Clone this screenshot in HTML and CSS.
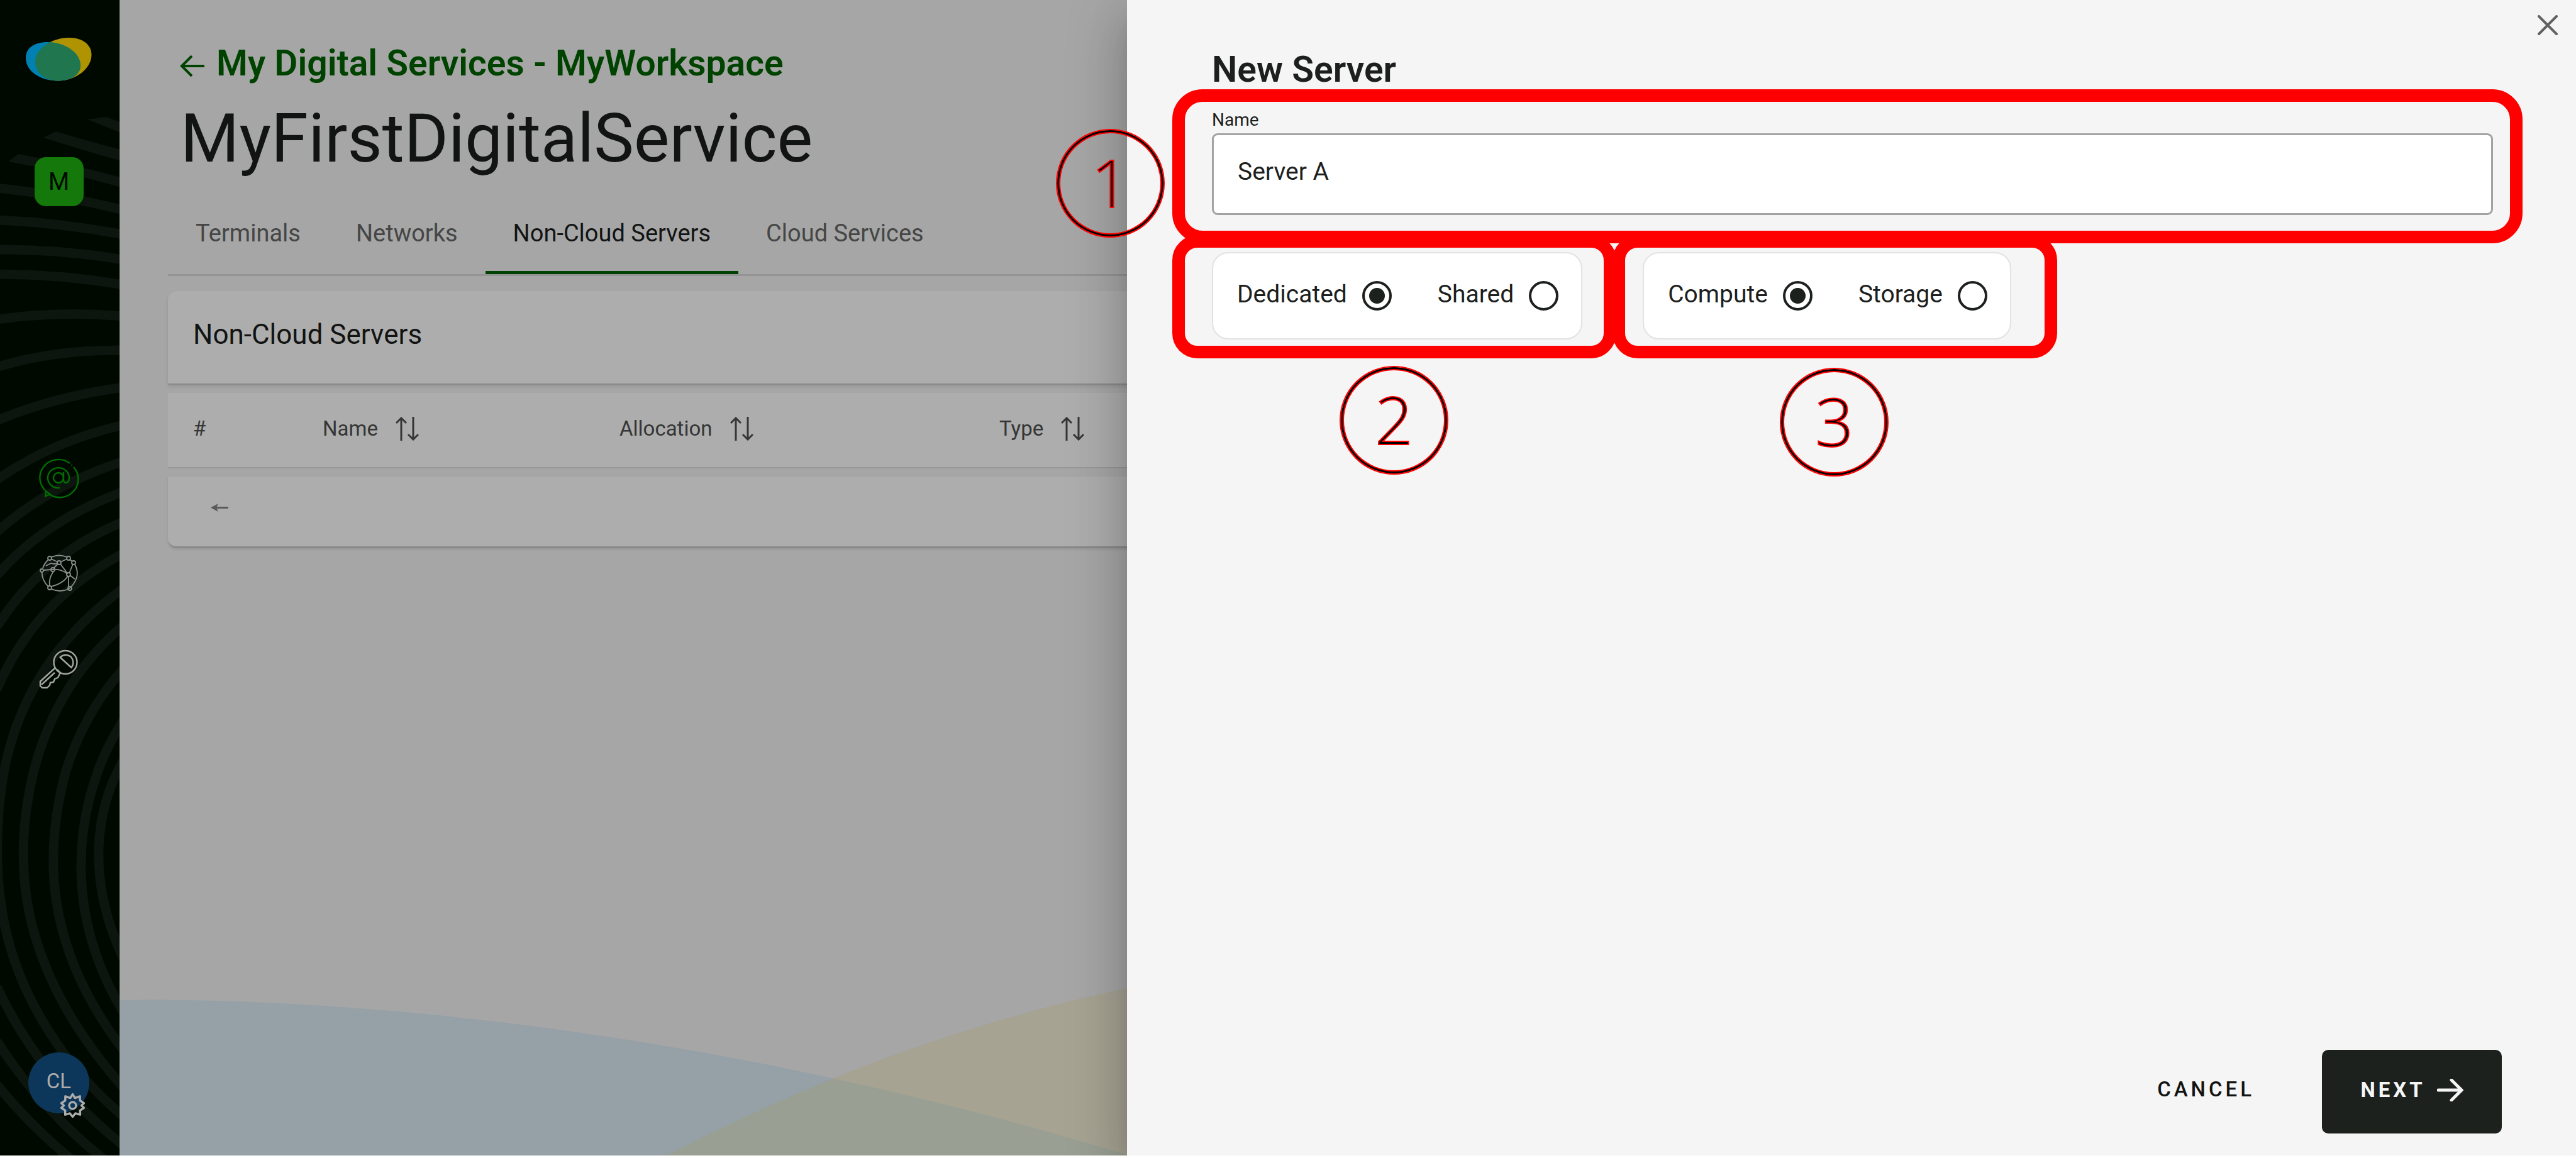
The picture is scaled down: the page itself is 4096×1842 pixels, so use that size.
FILE: index.html
```html
<!DOCTYPE html>
<html lang="en">
<head>
<meta charset="utf-8">
<title>MyFirstDigitalService</title>
<link rel="stylesheet" href="styles.css">
</head>
<body>
<div class="app">
  <aside class="sidebar">
    <svg class="sidebar-art" viewBox="0 0 190 1838" preserveAspectRatio="none" aria-hidden="true">
      <g fill="none" stroke="#0c150e" stroke-width="15">
        <path d="M139 190L169 186L196 196L196 213Z" fill="#0c150e" stroke="none"/>
        <path d="M69 219L89 209Q145 226 196 239L196 257Q135 240 69 219Z" fill="#0c150e" stroke="none"/>
        <path d="M13 257L29 245Q110 260 196 283L196 299Q110 274 13 257Z" fill="#0c150e" stroke="none"/>
        <path d="M-5 299Q95 309 196 334"/>
        <path d="M-5 350Q95 354 196 373"/>
        <path d="M-5 397Q95 396 196 413"/>
        <path d="M-5 436Q95 436 196 453"/>
        <path d="M-5 508Q95 494 196 503"/>
        <path d="M-5 584Q85 556 196 557"/>
        <path d="M-5 669Q85 631 196 616"/>
        <path d="M-5 763Q85 701 196 676"/>
        <path d="M-5 846Q80 771 196 734"/>
        <path d="M-5 915Q72 827 196 782"/>
        <path d="M-5 997Q68 882 196 830"/>
        <path d="M-5 1097Q55 955 196 880"/>
        <path d="M196 936Q40 1050 6 1229C-8 1310 -6 1390 2 1440C20 1570 95 1690 196 1776"/>
        <path d="M196 995Q90 1085 53 1229C22 1360 20 1530 196 1730"/>
        <path d="M196 1064Q133 1135 104 1229C72 1350 66 1500 196 1670"/>
        <path d="M196 1146Q168 1190 155 1229C122 1320 106 1460 196 1610"/>
        <path d="M196 1210C150 1290 138 1400 196 1524"/>
        <path d="M-5 1570Q65 1718 196 1822"/>
        <path d="M-5 1656Q65 1765 170 1848"/>
        <path d="M-5 1725Q45 1788 118 1848"/>
      </g>
    </svg>
    <svg class="logo" viewBox="0 0 105 69" aria-label="Logo">
      <defs>
        <clipPath id="lobe"><path d="M69 0C90 0 104.500 11 104.500 27C104.500 50 78 68.500 51 68.500C30 68.500 15 56 15 38C15 18 40 0 69 0Z"/></clipPath>
      </defs>
      <path d="M69 0C90 0 104.500 11 104.500 27C104.500 50 78 68.500 51 68.500C30 68.500 15 56 15 38C15 18 40 0 69 0Z" fill="#b09300"/>
      <path d="M0 32C0 16 14 7 34 7C62 7 87 24 87 44C87 60 70 68.500 51 68.500C24 68.500 0 54 0 32Z" fill="#0080b3"/>
      <path clip-path="url(#lobe)" d="M0 32C0 16 14 7 34 7C62 7 87 24 87 44C87 60 70 68.500 51 68.500C24 68.500 0 54 0 32Z" fill="#20764f"/>
    </svg>
    <button class="workspace" type="button">M</button>
    <nav class="side-nav">
      <a href="#services" aria-label="Digital services">
        <svg class="side-icon side-icon-active" viewBox="0 0 61 61">
          <path d="M48 7A29.500 29 0 1 0 17 56L9 59.500L10 52"/>
          <path d="M54 13A29.500 29 0 0 1 15 56"/>
          <path d="M50.500 9.200L51.500 10"/>
          <circle cx="30" cy="30" r="8"/>
          <path d="M38 21V33C38 41 47 39 47 30A17 16 0 1 0 32 46"/>
        </svg>
      </a>
      <a href="#network" aria-label="Network">
        <svg class="side-icon side-icon-thin" viewBox="0 0 61 61">
          <path d="M19 4Q31 -1 43 4M48 8L52 11M56 16Q65 32 53 48Q50 52 46 55Q32 61 19 55M14 51Q4 42 3.500 28M5 22Q7 15 13 9"/>
          <path d="M18 7L29 12M44 7L33 12M6 25L18 24Q34 22 44 31M29 15L22 22M33 15L44 30M47 30L53 15M48 33L56 39M46 35V52M22 27Q14 38 16 50M18 51Q38 46 45 34M10 18L18 14Q24 16 28 14"/>
          <circle cx="16" cy="6" r="3"/><circle cx="46" cy="6" r="3"/><circle cx="31" cy="13" r="3"/><circle cx="54" cy="13" r="3"/><circle cx="3.500" cy="25.500" r="2.500"/><circle cx="21" cy="24" r="3"/><circle cx="46" cy="32" r="3"/><circle cx="16" cy="53" r="3"/><circle cx="48" cy="54" r="3"/>
        </svg>
      </a>
      <a href="#access" aria-label="Access">
        <svg class="side-icon" viewBox="0 0 61 61">
          <circle cx="41" cy="19.500" r="18.500"/>
          <path d="M32.500 11.500Q41 4.500 49.500 10.500Q57 19 50.500 28Z"/>
          <path d="M25 28L1 50V57L4 60H12L16 56L17 52L22 51L24 46L29 44L33 36M28 31L33 36M3 55L24 36"/>
        </svg>
      </a>
    </nav>
    <button class="avatar" type="button">CL
      <svg class="gear" viewBox="0 0 24 24" aria-hidden="true">
        <path d="M12 1.500L14.200 5L18.800 3.400L18.900 7.400L22.500 9.800L20.200 12L22.500 14.200L18.900 16.600L19 20.600L14.500 19.300L12 22.500L9.500 19.300L5 20.600L5.100 16.600L1.500 14.200L3.800 12L1.500 9.800L5.100 7.400L5.200 3.400L9.800 5Z"/>
        <circle cx="12" cy="12" r="3.200"/>
      </svg>
    </button>
  </aside>

  <main class="main">
    <svg class="waves" viewBox="0 0 1602 270" preserveAspectRatio="none" aria-hidden="true">
      <path d="M0 23Q35 22 70 22.300C560 28 1080 111 1602 269V270H0Z" fill="#95a1a7"/>
      <path d="M870 270Q1233 81 1602 4V270Z" fill="#a69d66" fill-opacity=".3"/>
    </svg>
    <a class="breadcrumb" href="#workspace">
      <svg class="back" viewBox="0 0 40 34" aria-hidden="true"><path d="M39 17H3M19 1L3 17L19 33"/></svg>
      <span>My Digital Services - MyWorkspace</span>
    </a>
    <h1 class="title">MyFirstDigitalService</h1>
    <nav class="tabs">
      <a class="tab" href="#terminals">Terminals</a>
      <a class="tab" href="#networks">Networks</a>
      <a class="tab tab-active" href="#servers" aria-current="page">Non-Cloud Servers</a>
      <a class="tab" href="#cloud">Cloud Services</a>
    </nav>
    <section class="servers">
      <h2 class="servers-title">Non-Cloud Servers</h2>
      <table class="servers-table">
        <thead>
          <tr>
            <th class="col-index" scope="col">#</th>
            <th class="col-name" scope="col"><span class="sortable">Name <svg class="sort" viewBox="0 0 37 38"><path d="M9 38V2M1 10L9 2L17 10M28 0V36M20 28L28 36L36 28"/></svg></span></th>
            <th class="col-allocation" scope="col"><span class="sortable">Allocation <svg class="sort" viewBox="0 0 37 38"><path d="M9 38V2M1 10L9 2L17 10M28 0V36M20 28L28 36L36 28"/></svg></span></th>
            <th scope="col"><span class="sortable">Type <svg class="sort" viewBox="0 0 37 38"><path d="M9 38V2M1 10L9 2L17 10M28 0V36M20 28L28 36L36 28"/></svg></span></th>
          </tr>
        </thead>
        <tbody>
          <tr>
            <td colspan="4"><button class="previous" type="button" aria-label="Previous page"><svg viewBox="0 0 28 15"><path d="M5 6H28V9H5Z"/><path d="M0 7.500L12 1L9 7.500L12 14Z"/></svg></button></td>
          </tr>
        </tbody>
      </table>
    </section>
  </main>

  <form class="drawer">
    <button class="close" type="button" aria-label="Close"><svg viewBox="0 0 32 32"><path d="M2 2L30 30M30 2L2 30"/></svg></button>
    <h2 class="drawer-title">New Server</h2>
    <div class="field">
      <label for="server-name">Name</label>
      <input class="text-input" id="server-name" type="text" value="Server A">
      <span class="highlight highlight-name"></span>
      <span class="step step-name">1</span>
    </div>
    <div class="options">
      <div class="choice" role="radiogroup" aria-label="Allocation">
        <label class="option"><span>Dedicated</span><input type="radio" name="allocation" checked></label>
        <label class="option"><span>Shared</span><input type="radio" name="allocation"></label>
        <span class="highlight highlight-allocation"></span>
        <span class="step step-allocation">2</span>
      </div>
      <div class="choice" role="radiogroup" aria-label="Type">
        <label class="option"><span>Compute</span><input type="radio" name="type" checked></label>
        <label class="option"><span>Storage</span><input type="radio" name="type"></label>
        <span class="highlight highlight-type"></span>
        <span class="step step-type">3</span>
      </div>
    </div>
    <div class="actions">
      <button class="cancel" type="button">CANCEL</button>
      <button class="next" type="submit">NEXT <svg viewBox="0 0 42 36" aria-hidden="true"><path d="M2 18H39M23 2L39 18L23 34"/></svg></button>
    </div>
  </form>
</div>
</body>
</html>
```
FILE: styles.css
```css
* {
  box-sizing: border-box;
}

body {
  margin: 0;
  background: #ffffff;
  color: #121413;
  font-family: Roboto, "Liberation Sans", sans-serif;
  font-size: 38px;
  line-height: 44px;
}

button {
  padding: 0;
  border: 0;
  background: none;
  color: inherit;
  font: inherit;
  letter-spacing: inherit;
}

a {
  color: inherit;
  text-decoration: none;
}

svg {
  display: block;
  fill: none;
}

.app {
  position: relative;
  display: flex;
  height: calc(100vh - 4px);
  min-height: 1200px;
  overflow: hidden;
  background: #a6a6a6;
}

/* Sidebar */

.sidebar {
  position: relative;
  display: flex;
  flex: none;
  flex-direction: column;
  align-items: center;
  width: 191px;
  padding: 60px 3px 67px 0;
  border-right: 1px solid #8a8c8a;
  background: #000900;
}

.sidebar > * {
  position: relative;
}

.sidebar > .sidebar-art {
  position: absolute;
  inset: 0;
  width: 100%;
  height: 100%;
}

.logo {
  width: 105px;
  height: 69px;
}

.workspace {
  width: 78px;
  height: 78px;
  margin-top: 121px;
  border-radius: 18px;
  background: #14780a;
  color: #000900;
}

.side-nav {
  display: flex;
  flex-direction: column;
  gap: 91px;
  margin-top: 402px;
}

.side-icon {
  width: 61px;
  height: 61px;
  overflow: visible;
  stroke: #a3a5a3;
  stroke-width: 2.4;
  stroke-linejoin: round;
}

.side-icon-active {
  stroke: #006e00;
}

.side-icon-thin {
  stroke: #8c8f8c;
  stroke-width: 1.8;
}

.avatar {
  width: 97px;
  height: 97px;
  margin-top: auto;
  padding-bottom: 6px;
  border-radius: 50%;
  background: #0d375a;
  color: #adadad;
  font-size: 33px;
}

.gear {
  position: absolute;
  right: 6px;
  bottom: -8px;
  width: 41px;
  height: 41px;
  stroke: #adadad;
  stroke-width: 2;
  stroke-linejoin: round;
}

/* Page */

.main {
  position: relative;
  flex: 1;
  padding: 69px 77px 0 76px;
}

.main > * {
  position: relative;
}

.main > .waves {
  position: absolute;
  bottom: 0;
  left: 0;
  width: 41%;
  height: 270px;
}

.breadcrumb {
  display: flex;
  align-items: center;
  gap: 18px;
  padding-left: 19px;
  color: #004300;
  font-size: 57px;
  font-weight: 600;
  line-height: 64px;
}

.back {
  width: 40px;
  height: 34px;
  margin-top: 8px;
  stroke: currentColor;
  stroke-width: 4;
}

.title {
  margin: 28px 0 0;
  padding-left: 20px;
  font-size: 107px;
  font-weight: 400;
  line-height: 120px;
}

.tabs {
  display: flex;
  padding-top: 68px;
  border-bottom: 3px solid #949494;
  color: #454645;
}

.tab {
  padding: 0 44px 38px;
  border-bottom: 5px solid transparent;
}

.tab-active {
  border-color: #004300;
  color: #121413;
}

.servers {
  margin-top: 24px;
}

.servers-title {
  height: 149px;
  margin: 0;
  padding: 45px 40px;
  border-bottom: 2px solid #8a8a8a;
  border-radius: 14px 14px 0 0;
  background: #adadad;
  box-shadow: 0 3px 5px rgba(0, 0, 0, 0.1);
  font-size: 44px;
  font-weight: 400;
  line-height: 48px;
}

.servers-table {
  width: 100%;
  border-spacing: 0 13px;
  color: #353635;
  font-size: 33px;
  line-height: 40px;
  table-layout: fixed;
}

.servers-table th {
  height: 120px;
  padding: 0 0 4px 40px;
  border-bottom: 2px solid #989898;
  background: #adadad;
  font-weight: 400;
  text-align: left;
}

.servers-table td {
  height: 114px;
  padding: 0 0 20px 68px;
  border-bottom: 3px solid #8a8a8a;
  border-radius: 0 0 14px 14px;
  background: #adadad;
  box-shadow: 0 2px 4px rgba(0, 0, 0, 0.1);
}

.servers-table .col-index {
  width: 206px;
}

.servers-table .col-name {
  width: 472px;
}

.servers-table .col-allocation {
  width: 604px;
}

.sortable {
  display: flex;
  align-items: center;
  gap: 28px;
}

.sort {
  width: 37px;
  height: 38px;
  stroke: #353635;
  stroke-width: 3;
}

.previous svg {
  width: 28px;
  height: 15px;
  fill: #5a5a5a;
}

/* Drawer */

.drawer {
  position: absolute;
  inset: 0 0 0 auto;
  display: flex;
  flex-direction: column;
  width: 56.25%;
  padding: 80px 132px 35px 135px;
  background: #f5f5f5;
  box-shadow: 0 24px 30px -16px rgba(0, 0, 0, 0.16), 0 44px 70px 5px rgba(0, 0, 0, 0.14), 0 18px 90px 14px rgba(0, 0, 0, 0.12);
  color: #1d1f1e;
}

.close {
  position: absolute;
  top: 24px;
  right: 29px;
}

.close svg {
  width: 32px;
  height: 32px;
  stroke: #616161;
  stroke-width: 4;
  stroke-linecap: round;
}

.drawer-title {
  margin: 0;
  font-size: 57px;
  font-weight: 600;
  line-height: 62px;
}

.field {
  position: relative;
  display: flex;
  flex-direction: column;
  gap: 5px;
  margin-top: 33px;
  font-size: 28px;
  line-height: 32px;
}

.text-input {
  width: 100%;
  height: 130px;
  padding: 0 38px 8px;
  border: 3px solid #a3a3a3;
  border-radius: 9px;
  background: #ffffff;
  color: inherit;
  font: inherit;
  font-size: 39px;
}

.options {
  display: flex;
  gap: 96px;
  margin-top: 59px;
}

.choice {
  position: relative;
  display: flex;
  align-items: center;
  gap: 73px;
  height: 139px;
  padding: 0 36px 0 38px;
  border: 2px solid #e2e2e2;
  border-radius: 26px;
  background: #ffffff;
}

.option {
  display: flex;
  align-items: center;
  gap: 24px;
  font-size: 39px;
}

.option span {
  padding-bottom: 6px;
}

.option input {
  width: 47px;
  height: 47px;
  margin: 0;
  appearance: none;
  border: 4px solid #1d211e;
  border-radius: 50%;
}

.option input:checked {
  background: radial-gradient(circle, #1d211e 12px, transparent 13px);
}

.actions {
  display: flex;
  align-items: center;
  justify-content: flex-end;
  gap: 64px;
  margin: auto -14px 0 0;
  font-size: 33px;
  letter-spacing: 5px;
}

.cancel {
  height: 133px;
  padding: 0 43px 8px;
  color: #121413;
  font-weight: 500;
}

.next {
  display: flex;
  align-items: center;
  justify-content: center;
  gap: 18px;
  width: 286px;
  height: 133px;
  padding-bottom: 6px;
  border-radius: 10px;
  background: #1d211e;
  color: #f5f5f5;
  font-weight: 700;
}

.next svg {
  width: 42px;
  height: 36px;
  stroke: currentColor;
  stroke-width: 5;
  stroke-linecap: round;
}

/* Guided steps drawn over the form */

.highlight {
  position: absolute;
  border: 20px solid #ff0000;
  border-radius: 40px;
  pointer-events: none;
}

.highlight-name {
  inset: -33px -47px -45px -63px;
  border-radius: 48px;
}

.highlight-allocation {
  inset: -29px -56px -32px -65px;
}

.highlight-type {
  inset: -29px -75px -32px -50px;
}

.step {
  position: absolute;
  width: 173px;
  height: 173px;
  border: 2px solid #ff0000;
  border-radius: 50%;
  box-shadow: inset 0 0 0 3px #000000, inset 0 0 0 5px #ff0000;
  color: #000000;
  font-family: "Open Sans", sans-serif;
  font-size: 106px;
  font-weight: 300;
  line-height: 164px;
  text-align: center;
  -webkit-text-stroke: 2px #ff0000;
}

.step-name {
  top: 30px;
  left: -248px;
}

.step-allocation {
  top: 179px;
  left: 201px;
}

.step-type {
  top: 182px;
  left: 216px;
}
```
